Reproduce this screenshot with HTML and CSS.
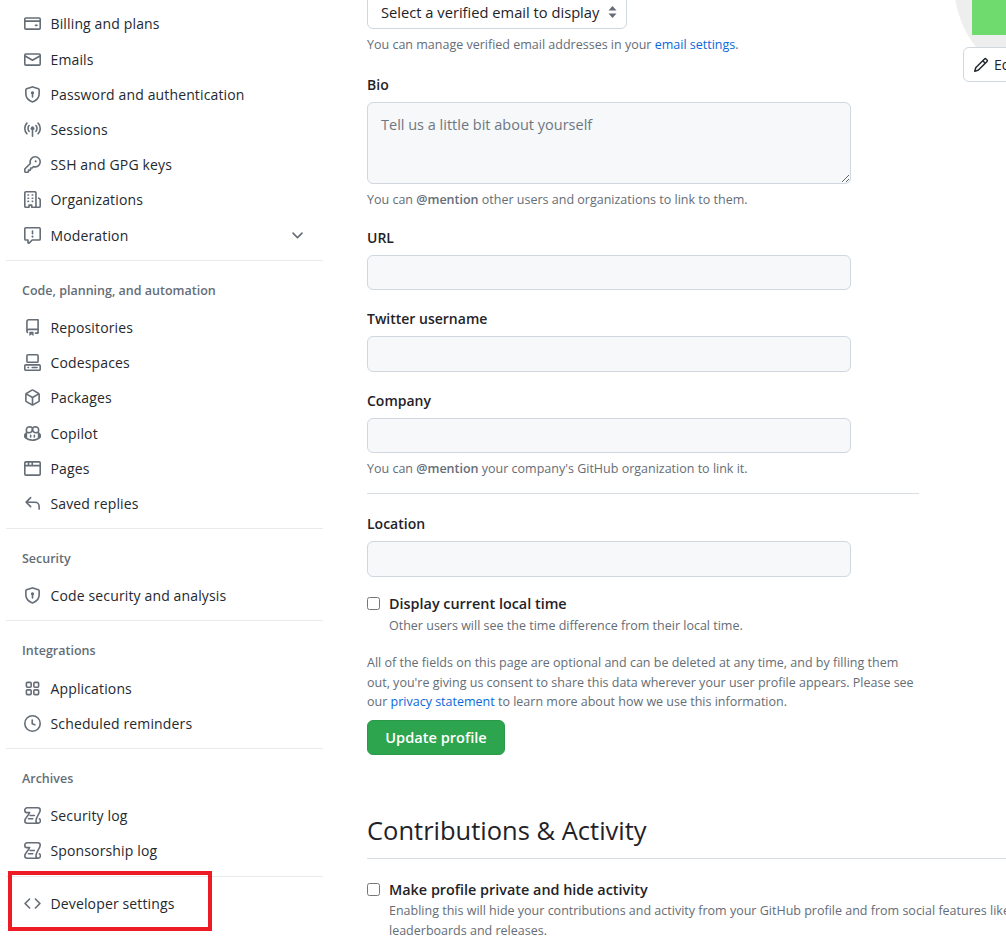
FILE: index.html
```html
<!DOCTYPE html>
<html lang="en">
<head>
    <meta charset="UTF-8">
    <meta name="viewport" content="width=device-width, initial-scale=1.0">
    <title>Public profile</title>
    <link rel="stylesheet" href="styles.css">
</head>
<body>
    <div class="page">
        <!-- Settings menu -->
        <nav class="sidebar">
            <a class="nav-item"><svg class="icon" viewBox="0 0 16 16"><path d="M10.75 9a.75.75 0 0 0 0 1.5h1.5a.75.75 0 0 0 0-1.5h-1.5Z"/><path d="M0 3.75C0 2.784.784 2 1.75 2h12.5c.966 0 1.75.784 1.75 1.75v8.5A1.75 1.75 0 0 1 14.25 14H1.75A1.75 1.75 0 0 1 0 12.25ZM14.5 6.5h-13v5.75c0 .138.112.25.25.25h12.5a.25.25 0 0 0 .25-.25Zm0-2.75a.25.25 0 0 0-.25-.25H1.75a.25.25 0 0 0-.25.25V5h13Z"/></svg>Billing and plans</a>
            <a class="nav-item"><svg class="icon" viewBox="0 0 16 16"><path d="M1.75 2h12.5c.966 0 1.75.784 1.75 1.75v8.5A1.75 1.75 0 0 1 14.25 14H1.75A1.75 1.75 0 0 1 0 12.25v-8.5C0 2.784.784 2 1.75 2ZM1.5 12.251c0 .138.112.25.25.25h12.5a.25.25 0 0 0 .25-.25V5.809L8.38 9.397a.75.75 0 0 1-.76 0L1.5 5.809v6.442Zm13-8.181v-.32a.25.25 0 0 0-.25-.25H1.75a.25.25 0 0 0-.25.25v.32L8 7.88Z"/></svg>Emails</a>
            <a class="nav-item"><svg class="icon" viewBox="0 0 16 16"><path d="M7.467.133a1.748 1.748 0 0 1 1.066 0l5.25 1.68A1.75 1.75 0 0 1 15 3.48V7c0 1.566-.32 3.182-1.303 4.682-.983 1.498-2.585 2.813-5.032 3.855a1.697 1.697 0 0 1-1.33 0c-2.447-1.042-4.049-2.357-5.032-3.855C1.32 10.182 1 8.566 1 7V3.48a1.75 1.75 0 0 1 1.217-1.667Zm.61 1.429a.25.25 0 0 0-.153 0l-5.25 1.68a.25.25 0 0 0-.174.238V7c0 1.358.275 2.666 1.057 3.86.784 1.194 2.121 2.34 4.366 3.297a.196.196 0 0 0 .154 0c2.245-.956 3.582-2.104 4.366-3.298C13.225 9.666 13.5 8.36 13.5 7V3.48a.251.251 0 0 0-.174-.237l-5.25-1.68ZM9.5 6.5c0 .536-.286 1.032-.75 1.3v2.45a.75.75 0 0 1-1.5 0V7.8A1.5 1.5 0 1 1 9.5 6.5Z"/></svg>Password and authentication</a>
            <a class="nav-item"><svg class="icon" viewBox="0 0 16 16"><path d="M8.75 8.582v5.668a.75.75 0 0 1-1.5 0V8.582a1.75 1.75 0 1 1 1.5 0Zm3.983-7.125a.75.75 0 0 1 1.06.026A7.976 7.976 0 0 1 16 7c0 2.139-.84 4.083-2.207 5.517a.75.75 0 1 1-1.086-1.034A6.474 6.474 0 0 0 14.5 7a6.474 6.474 0 0 0-1.793-4.483.75.75 0 0 1 .026-1.06Zm-9.466 0a.75.75 0 0 1 .026 1.06A6.474 6.474 0 0 0 1.5 7a6.47 6.47 0 0 0 1.793 4.483.75.75 0 0 1-1.086 1.034A7.973 7.973 0 0 1 0 7c0-2.139.84-4.083 2.207-5.517a.75.75 0 0 1 1.06-.026Zm8.556 2.321A4.988 4.988 0 0 1 13 7a4.988 4.988 0 0 1-1.177 3.222.75.75 0 1 1-1.146-.967A3.487 3.487 0 0 0 11.5 7c0-.86-.309-1.645-.823-2.255a.75.75 0 0 1 1.146-.967Zm-6.492.958A3.48 3.48 0 0 0 4.5 7a3.48 3.48 0 0 0 .823 2.255.75.75 0 0 1-1.146.967A4.981 4.981 0 0 1 3 7a4.98 4.98 0 0 1 1.188-3.236.75.75 0 1 1 1.143.97Z"/></svg>Sessions</a>
            <a class="nav-item"><svg class="icon" viewBox="0 0 16 16"><path d="M10.5 0a5.499 5.499 0 1 1-1.288 10.848l-.932.932a.749.749 0 0 1-.53.22H7v.75a.749.749 0 0 1-.22.53l-.5.5a.749.749 0 0 1-.53.22H5v.75a.749.749 0 0 1-.22.53l-.5.5a.749.749 0 0 1-.53.22h-2A1.75 1.75 0 0 1 0 14.25v-2c0-.199.079-.389.22-.53l4.932-4.932A5.5 5.5 0 0 1 10.5 0Zm-4 5.5c-.001.431.069.86.205 1.269a.75.75 0 0 1-.181.768L1.5 12.56v1.69c0 .138.112.25.25.25h1.69l.06-.06v-1.19a.75.75 0 0 1 .75-.75h1.19l.06-.06v-1.19a.75.75 0 0 1 .75-.75h1.19l1.023-1.025a.75.75 0 0 1 .768-.18A4 4 0 1 0 6.5 5.5ZM11 6a1 1 0 1 1 0-2 1 1 0 0 1 0 2Z"/></svg>SSH and GPG keys</a>
            <a class="nav-item"><svg class="icon" viewBox="0 0 16 16"><path d="M1.75 16A1.75 1.75 0 0 1 0 14.25V1.75C0 .784.784 0 1.75 0h8.5C11.216 0 12 .784 12 1.75v12.5c0 .085-.006.168-.018.25h2.268a.25.25 0 0 0 .25-.25V8.285a.25.25 0 0 0-.111-.208l-1.055-.703a.749.749 0 1 1 .832-1.248l1.055.703c.487.325.779.871.779 1.456v5.965A1.75 1.75 0 0 1 14.25 16h-3.5a.766.766 0 0 1-.197-.026c-.099.017-.2.026-.303.026h-3a.75.75 0 0 1-.75-.75V14h-1v1.25a.75.75 0 0 1-.75.75Zm-.25-1.75c0 .138.112.25.25.25H4v-1.25a.75.75 0 0 1 .75-.75h2.5a.75.75 0 0 1 .75.75v1.25h2.25a.25.25 0 0 0 .25-.25V1.75a.25.25 0 0 0-.25-.25h-8.5a.25.25 0 0 0-.25.25ZM3.75 6h.5a.75.75 0 0 1 0 1.5h-.5a.75.75 0 0 1 0-1.5ZM3 3.75A.75.75 0 0 1 3.75 3h.5a.75.75 0 0 1 0 1.5h-.5A.75.75 0 0 1 3 3.75Zm4 3A.75.75 0 0 1 7.75 6h.5a.75.75 0 0 1 0 1.5h-.5A.75.75 0 0 1 7 6.75ZM7.75 3h.5a.75.75 0 0 1 0 1.5h-.5a.75.75 0 0 1 0-1.5ZM3 9.75A.75.75 0 0 1 3.75 9h.5a.75.75 0 0 1 0 1.5h-.5A.75.75 0 0 1 3 9.75ZM7.75 9h.5a.75.75 0 0 1 0 1.5h-.5a.75.75 0 0 1 0-1.5Z"/></svg>Organizations</a>
            <a class="nav-item"><svg class="icon" viewBox="0 0 16 16"><path d="M0 1.75C0 .784.784 0 1.75 0h12.5C15.216 0 16 .784 16 1.75v9.5A1.75 1.75 0 0 1 14.25 13H8.06l-2.573 2.573A1.458 1.458 0 0 1 3 14.543V13H1.75A1.75 1.75 0 0 1 0 11.25Zm1.75-.25a.25.25 0 0 0-.25.25v9.5c0 .138.112.25.25.25h2a.75.75 0 0 1 .75.75v2.19l2.72-2.72a.749.749 0 0 1 .53-.22h6.5a.25.25 0 0 0 .25-.25v-9.5a.25.25 0 0 0-.25-.25Zm7 2.25v2.5a.75.75 0 0 1-1.5 0v-2.5a.75.75 0 0 1 1.5 0ZM9 9a1 1 0 1 1-2 0 1 1 0 0 1 2 0Z"/></svg>Moderation<svg class="icon chevron" viewBox="0 0 16 16"><path d="M12.78 5.22a.749.749 0 0 1 0 1.06l-4.25 4.25a.749.749 0 0 1-1.06 0L3.22 6.28a.749.749 0 1 1 1.06-1.06L8 8.939l3.72-3.719a.749.749 0 0 1 1.06 0Z"/></svg></a>

            <hr class="nav-divider">
            <h3 class="nav-heading">Code, planning, and automation</h3>
            <a class="nav-item"><svg class="icon" viewBox="0 0 16 16"><path d="M2 2.5A2.5 2.5 0 0 1 4.5 0h8.75a.75.75 0 0 1 .75.75v12.5a.75.75 0 0 1-.75.75h-2.5a.75.75 0 0 1 0-1.5h1.75v-2h-8a1 1 0 0 0-.714 1.7.75.75 0 1 1-1.072 1.05A2.495 2.495 0 0 1 2 11.5Zm10.5-1h-8a1 1 0 0 0-1 1v6.708A2.486 2.486 0 0 1 4.5 9h8ZM5 12.25a.25.25 0 0 1 .25-.25h3.5a.25.25 0 0 1 .25.25v3.25a.25.25 0 0 1-.4.2l-1.45-1.087a.249.249 0 0 0-.3 0L5.4 15.7a.25.25 0 0 1-.4-.2Z"/></svg>Repositories</a>
            <a class="nav-item"><svg class="icon" viewBox="0 0 16 16"><path d="M0 11.25c0-.966.784-1.75 1.75-1.75h12.5c.966 0 1.75.784 1.75 1.75v3A1.75 1.75 0 0 1 14.25 16H1.75A1.75 1.75 0 0 1 0 14.25Zm2-9.5C2 .784 2.784 0 3.75 0h8.5C13.216 0 14 .784 14 1.75v5a1.75 1.75 0 0 1-1.75 1.75h-8.5A1.75 1.75 0 0 1 2 6.75Zm1.75-.25a.25.25 0 0 0-.25.25v5c0 .138.112.25.25.25h8.5a.25.25 0 0 0 .25-.25v-5a.25.25 0 0 0-.25-.25Zm-2 9.5a.25.25 0 0 0-.25.25v3c0 .138.112.25.25.25h12.5a.25.25 0 0 0 .25-.25v-3a.25.25 0 0 0-.25-.25Z"/><path d="M7 12.75a.75.75 0 0 1 .75-.75h4.5a.75.75 0 0 1 0 1.5h-4.5a.75.75 0 0 1-.75-.75Zm-4 0a.75.75 0 0 1 .75-.75h.5a.75.75 0 0 1 0 1.5h-.5a.75.75 0 0 1-.75-.75Z"/></svg>Codespaces</a>
            <a class="nav-item"><svg class="icon" viewBox="0 0 16 16"><path d="m8.878.392 5.25 3.045c.54.314.872.89.872 1.514v6.098a1.75 1.75 0 0 1-.872 1.514l-5.25 3.045a1.75 1.75 0 0 1-1.756 0l-5.25-3.045A1.75 1.75 0 0 1 1 11.049V4.951c0-.624.332-1.201.872-1.514L7.122.392a1.75 1.75 0 0 1 1.756 0ZM7.875 1.69l-4.63 2.685L8 7.133l4.755-2.758-4.63-2.685a.248.248 0 0 0-.25 0ZM2.5 5.677v5.372c0 .09.047.171.125.216l4.625 2.683V8.432Zm6.25 8.271 4.625-2.683a.25.25 0 0 0 .125-.216V5.677L8.75 8.432Z"/></svg>Packages</a>
            <a class="nav-item"><svg class="icon" viewBox="0 0 16 16"><path d="M7.998 15.035c-4.562 0-7.873-2.914-7.998-3.749V9.338c.085-.628.677-1.686 1.588-2.065.013-.07.024-.143.036-.218.029-.183.06-.384.126-.612-.201-.508-.254-1.084-.254-1.656 0-.87.128-1.769.693-2.484.579-.733 1.494-1.124 2.724-1.261 1.206-.134 2.262.034 2.944.765.05.053.096.108.139.165.044-.057.094-.112.143-.165.682-.731 1.738-.899 2.944-.765 1.23.137 2.145.528 2.724 1.261.566.715.693 1.614.693 2.484 0 .572-.053 1.148-.254 1.656.066.228.098.429.126.612.012.076.024.148.037.218.924.385 1.522 1.471 1.591 2.095v1.872c0 .766-3.351 3.795-8.002 3.795Zm0-1.485c2.28 0 4.584-1.11 5.002-1.433V7.862l-.023-.116c-.49.21-1.075.291-1.727.291-1.146 0-2.059-.327-2.71-.991A3.222 3.222 0 0 1 8 6.303a3.24 3.24 0 0 1-.544.743c-.65.664-1.563.991-2.71.991-.652 0-1.236-.081-1.727-.291l-.023.116v4.255c.419.323 2.722 1.433 5.002 1.433ZM6.762 2.83c-.193-.206-.637-.413-1.682-.297-1.019.113-1.479.404-1.713.7-.247.312-.369.789-.369 1.554 0 .793.129 1.171.308 1.371.162.181.519.379 1.442.379.853 0 1.339-.235 1.638-.54.315-.322.527-.827.617-1.553.117-.935-.037-1.395-.241-1.614Zm4.155-.297c-1.044-.116-1.488.091-1.681.297-.204.219-.359.679-.242 1.614.091.726.303 1.231.618 1.553.299.305.784.54 1.638.54.922 0 1.28-.198 1.442-.379.179-.2.308-.578.308-1.371 0-.765-.123-1.242-.37-1.554-.233-.296-.693-.587-1.713-.7Z"/><path d="M6.25 9.037a.75.75 0 0 1 .75.75v1.501a.75.75 0 0 1-1.5 0V9.787a.75.75 0 0 1 .75-.75Zm4.25.75v1.501a.75.75 0 0 1-1.5 0V9.787a.75.75 0 0 1 1.5 0Z"/></svg>Copilot</a>
            <a class="nav-item"><svg class="icon" viewBox="0 0 16 16"><path d="M0 2.75C0 1.784.784 1 1.75 1h12.5c.966 0 1.75.784 1.75 1.75v10.5A1.75 1.75 0 0 1 14.25 15H1.75A1.75 1.75 0 0 1 0 13.25ZM14.5 6h-13v7.25c0 .138.112.25.25.25h12.5a.25.25 0 0 0 .25-.25Zm-6-3.5v2h6V2.75a.25.25 0 0 0-.25-.25ZM5 2.5v2h2v-2Zm-3.25 0a.25.25 0 0 0-.25.25V4.5h2v-2Z"/></svg>Pages</a>
            <a class="nav-item"><svg class="icon" viewBox="0 0 16 16"><path d="M6.78 1.97a.75.75 0 0 1 0 1.06L3.81 6h6.44A4.75 4.75 0 0 1 15 10.75v2.5a.75.75 0 0 1-1.5 0v-2.5a3.25 3.25 0 0 0-3.25-3.25H3.81l2.97 2.97a.749.749 0 0 1-.326 1.275.749.749 0 0 1-.734-.215L1.47 7.28a.75.75 0 0 1 0-1.06l4.25-4.25a.75.75 0 0 1 1.06 0Z"/></svg>Saved replies</a>

            <hr class="nav-divider">
            <h3 class="nav-heading">Security</h3>
            <a class="nav-item"><svg class="icon" viewBox="0 0 16 16"><path d="M7.467.133a1.748 1.748 0 0 1 1.066 0l5.25 1.68A1.75 1.75 0 0 1 15 3.48V7c0 1.566-.32 3.182-1.303 4.682-.983 1.498-2.585 2.813-5.032 3.855a1.697 1.697 0 0 1-1.33 0c-2.447-1.042-4.049-2.357-5.032-3.855C1.32 10.182 1 8.566 1 7V3.48a1.75 1.75 0 0 1 1.217-1.667Zm.61 1.429a.25.25 0 0 0-.153 0l-5.25 1.68a.25.25 0 0 0-.174.238V7c0 1.358.275 2.666 1.057 3.86.784 1.194 2.121 2.34 4.366 3.297a.196.196 0 0 0 .154 0c2.245-.956 3.582-2.104 4.366-3.298C13.225 9.666 13.5 8.36 13.5 7V3.48a.251.251 0 0 0-.174-.237l-5.25-1.68ZM9.5 6.5c0 .536-.286 1.032-.75 1.3v2.45a.75.75 0 0 1-1.5 0V7.8A1.5 1.5 0 1 1 9.5 6.5Z"/></svg>Code security and analysis</a>

            <hr class="nav-divider">
            <h3 class="nav-heading">Integrations</h3>
            <a class="nav-item"><svg class="icon" viewBox="0 0 16 16"><path d="M1.5 3.25c0-.966.784-1.75 1.75-1.75h2.5c.966 0 1.75.784 1.75 1.75v2.5A1.75 1.75 0 0 1 5.75 7.5h-2.5A1.75 1.75 0 0 1 1.5 5.75Zm7 0c0-.966.784-1.75 1.75-1.75h2.5c.966 0 1.75.784 1.75 1.75v2.5a1.75 1.75 0 0 1-1.75 1.75h-2.5A1.75 1.75 0 0 1 8.5 5.75Zm-7 7c0-.966.784-1.75 1.75-1.75h2.5c.966 0 1.75.784 1.75 1.75v2.5a1.75 1.75 0 0 1-1.75 1.75h-2.5a1.75 1.75 0 0 1-1.75-1.75Zm7 0c0-.966.784-1.75 1.75-1.75h2.5c.966 0 1.75.784 1.75 1.75v2.5a1.75 1.75 0 0 1-1.75 1.75h-2.5a1.75 1.75 0 0 1-1.75-1.75ZM3.25 3a.25.25 0 0 0-.25.25v2.5c0 .138.112.25.25.25h2.5A.25.25 0 0 0 6 5.75v-2.5A.25.25 0 0 0 5.75 3Zm7 0a.25.25 0 0 0-.25.25v2.5c0 .138.112.25.25.25h2.5a.25.25 0 0 0 .25-.25v-2.5a.25.25 0 0 0-.25-.25Zm-7 7a.25.25 0 0 0-.25.25v2.5c0 .138.112.25.25.25h2.5a.25.25 0 0 0 .25-.25v-2.5a.25.25 0 0 0-.25-.25Zm7 0a.25.25 0 0 0-.25.25v2.5c0 .138.112.25.25.25h2.5a.25.25 0 0 0 .25-.25v-2.5a.25.25 0 0 0-.25-.25Z"/></svg>Applications</a>
            <a class="nav-item"><svg class="icon" viewBox="0 0 16 16"><path d="M8 0a8 8 0 1 1 0 16A8 8 0 0 1 8 0ZM1.5 8a6.5 6.5 0 1 0 13 0 6.5 6.5 0 0 0-13 0Zm7-3.25v2.992l2.028.812a.75.75 0 0 1-.557 1.392l-2.5-1A.751.751 0 0 1 7 8.25v-3.5a.75.75 0 0 1 1.5 0Z"/></svg>Scheduled reminders</a>

            <hr class="nav-divider">
            <h3 class="nav-heading">Archives</h3>
            <a class="nav-item"><svg class="icon log-icon" viewBox="0 0 16 16"><path d="M3 .75h10A2.25 2.25 0 0 1 15.25 3c0 2.8-4 6-4 10a2.25 2.25 0 0 0 2.25 2.25H3A2.25 2.25 0 0 1 .75 13c0-2.8 4-5.5 4.5-7.75H2.6C1.5 5.25.75 4.2.75 3A2.25 2.25 0 0 1 3 .75ZM13.5 15.25a2.25 2.25 0 0 0 1-4.1M5.75 8h4M4.25 11h4"/></svg>Security log</a>
            <a class="nav-item"><svg class="icon log-icon" viewBox="0 0 16 16"><path d="M3 .75h10A2.25 2.25 0 0 1 15.25 3c0 2.8-4 6-4 10a2.25 2.25 0 0 0 2.25 2.25H3A2.25 2.25 0 0 1 .75 13c0-2.8 4-5.5 4.5-7.75H2.6C1.5 5.25.75 4.2.75 3A2.25 2.25 0 0 1 3 .75ZM13.5 15.25a2.25 2.25 0 0 0 1-4.1M5.75 8h4M4.25 11h4"/></svg>Sponsorship log</a>

            <hr class="nav-divider">
            <a class="nav-item"><svg class="icon" viewBox="0 0 16 16"><path d="m11.28 3.22 4.25 4.25a.75.75 0 0 1 0 1.06l-4.25 4.25a.749.749 0 0 1-1.275-.326.749.749 0 0 1 .215-.734L13.94 8l-3.72-3.72a.749.749 0 0 1 .326-1.275.749.749 0 0 1 .734.215Zm-6.56 0a.751.751 0 0 1 1.042.018.751.751 0 0 1 .018 1.042L2.06 8l3.72 3.72a.749.749 0 0 1-.326 1.275.749.749 0 0 1-.734-.215L.47 8.53a.75.75 0 0 1 0-1.06Z"/></svg>Developer settings</a>
        </nav>

        <main class="content">
            <form class="profile-form">
                <div class="fake-select">Select a verified email to display<svg class="select-arrows" viewBox="0 0 8 12"><path d="M4 0 8 4.6H0ZM4 12 0 7.4h8Z"/></svg></div>
                <p class="note">You can manage verified email addresses in your <a class="link">email settings</a>.</p>

                <label class="field-label bio-label">Bio</label>
                <textarea class="text-input bio" placeholder="Tell us a little bit about yourself"></textarea>
                <p class="note">You can <b>@mention</b> other users and organizations to link to them.</p>

                <label class="field-label">URL</label>
                <input class="text-input" type="text">

                <label class="field-label">Twitter username</label>
                <input class="text-input" type="text">

                <label class="field-label">Company</label>
                <input class="text-input" type="text">
                <p class="note">You can <b>@mention</b> your company's GitHub organization to link it.</p>

                <hr class="form-divider">

                <label class="field-label">Location</label>
                <input class="text-input" type="text">

                <div class="check-row">
                    <input type="checkbox" class="check">
                    <div>
                        <div class="check-title">Display current local time</div>
                        <p class="note">Other users will see the time difference from their local time.</p>
                    </div>
                </div>

                <p class="note consent">All of the fields on this page are optional and can be deleted at any time, and by filling them out, you're giving us consent to share this data wherever your user profile appears. Please see our <a class="link">privacy statement</a> to learn more about how we use this information.</p>

                <button type="button" class="btn-update">Update profile</button>
            </form>

            <h2 class="section-title">Contributions &amp; Activity</h2>
            <div class="check-row private-row">
                <input type="checkbox" class="check">
                <div>
                    <div class="check-title">Make profile private and hide activity</div>
                    <p class="note wide-note">Enabling this will hide your contributions and activity from your GitHub profile and from social features like<br>leaderboards and releases.</p>
                </div>
            </div>
        </main>
    </div>

    <!-- Avatar column, mostly scrolled out of view -->
    <div class="avatar"><div class="avatar-green"></div></div>
    <div class="edit-btn"><svg class="icon pencil" viewBox="0 0 16 16"><path d="M11.013 1.427a1.75 1.75 0 0 1 2.474 0l1.086 1.086a1.75 1.75 0 0 1 0 2.474l-8.61 8.61c-.21.21-.47.364-.756.445l-3.251.93a.75.75 0 0 1-.927-.928l.929-3.25c.081-.286.235-.547.445-.758l8.61-8.61Zm.176 4.823L9.75 4.81l-6.286 6.287a.253.253 0 0 0-.064.108l-.558 1.953 1.953-.558a.253.253 0 0 0 .108-.064Zm1.238-3.763a.25.25 0 0 0-.354 0L10.811 3.75l1.439 1.44 1.263-1.263a.25.25 0 0 0 0-.354Z"/></svg>Edit</div>

    <!-- Annotation drawn on the screenshot -->
    <div class="highlight"></div>
</body>
</html>
```

FILE: styles.css
```css
* {
    margin: 0;
    padding: 0;
    box-sizing: border-box;
}

html, body {
    height: 100%;
    overflow: hidden;
    position: relative;
    background-color: #fff;
}

body {
    font-family: "Open Sans", "Noto Sans", "Liberation Sans", sans-serif;
    font-size: 14px;
    color: #1f2328;
}

.page {
    display: flex;
    align-items: flex-start;
    padding-left: 6px;
}

/* sidebar */
.sidebar {
    width: 317px;
    flex-shrink: 0;
    padding-top: 6.4px;
}

.nav-item {
    display: flex;
    align-items: center;
    height: 35.2px;
    padding: 0 17px 0 18px;
    font-size: 14px;
    letter-spacing: 0.14px;
    color: #24292f;
}

.icon {
    width: 17px;
    height: 17px;
    fill: #656d76;
    flex-shrink: 0;
    margin-right: 9.5px;
}

.log-icon {
    fill: none;
    stroke: #656d76;
    stroke-width: 1.5;
    stroke-linecap: round;
    stroke-linejoin: round;
}

.chevron {
    margin: 0 0 0 auto;
}

.nav-divider {
    border: 0;
    border-top: 1px solid #e8ebee;
    margin: 7px 0 9.6px;
}

.nav-heading {
    font-size: 12.5px;
    font-weight: 600;
    line-height: 20px;
    color: #656d76;
    padding-left: 16px;
    margin: 20px 0 9.2px;
}

/* main column */
.content {
    flex: 1;
    min-width: 0;
    margin-left: 44px;
}

.profile-form {
    width: 552px;
}

.fake-select {
    display: flex;
    align-items: center;
    width: 260px;
    height: 35px;
    margin-top: -6px;
    padding: 0 9px 0 13px;
    font-size: 14.7px;
    border: 1px solid #d0d7de;
    border-radius: 6px;
    justify-content: space-between;
}

.select-arrows {
    width: 9px;
    height: 12px;
    fill: #656d76;
}

.note {
    font-size: 12.5px;
    line-height: 19.6px;
    color: #656d76;
    margin-top: 6px;
}

.note b {
    font-weight: 600;
}

.link {
    color: #0969da;
}

.field-label {
    display: block;
    font-size: 14px;
    font-weight: 600;
    line-height: 20px;
    margin: 19px 0 7px;
}

.bio-label {
    margin-top: 20px;
}

.text-input {
    display: block;
    width: 484px;
    height: 35.2px;
    padding: 0 13px;
    font-family: inherit;
    font-size: 14.5px;
    background-color: #f6f8fa;
    border: 1px solid #d0d7de;
    border-radius: 6px;
}

.text-input::placeholder {
    color: #6e7781;
}

.bio {
    height: 82px;
    padding-top: 12px;
}

.form-divider {
    border: 0;
    border-top: 1px solid #d8dee4;
    margin: 15px 0 20px;
}

.check-row {
    display: flex;
    align-items: flex-start;
    margin-top: 17px;
}

.check {
    width: 13px;
    height: 13px;
    margin: 3px 9px 0 0;
    flex-shrink: 0;
}

.check-title {
    font-size: 14.4px;
    font-weight: 600;
    line-height: 20px;
}

.check-row .note {
    margin-top: 2px;
}

.consent {
    margin-top: 18px;
}

.btn-update {
    display: block;
    width: 138px;
    height: 35px;
    margin-top: 8px;
    font-family: inherit;
    font-size: 14.6px;
    font-weight: 600;
    color: #fff;
    background-color: #2da44e;
    border: 1px solid #2a9a4a;
    border-radius: 6px;
}

.section-title {
    font-size: 25.5px;
    font-weight: 400;
    line-height: 34px;
    margin-top: 58px;
    padding-bottom: 11px;
    border-bottom: 1px solid #d8dee4;
}

.private-row {
    margin-top: 21px;
}

.check-row .wide-note {
    margin-top: 1px;
    white-space: nowrap;
}

/* pieces laid over the page */
.avatar {
    position: absolute;
    left: 953.6px;
    top: -122px;
    width: 210px;
    height: 210px;
    border-radius: 50%;
    background-color: #eeeeee;
    overflow: hidden;
}

.avatar-green {
    position: absolute;
    left: 18.4px;
    top: 0;
    width: 200px;
    height: 157px;
    background-color: #6fdb6f;
}

.edit-btn {
    position: absolute;
    left: 963px;
    top: 47px;
    width: 70px;
    height: 35px;
    display: flex;
    align-items: center;
    padding-left: 9px;
    font-size: 14px;
    background-color: #fff;
    border: 1px solid #d0d7de;
    border-radius: 6px;
}

.pencil {
    fill: #24292f;
    width: 16px;
    height: 16px;
    margin-right: 5px;
}

.highlight {
    position: absolute;
    left: 8px;
    top: 871px;
    width: 204px;
    height: 60px;
    border: 4px solid #ed1c24;
}
```
